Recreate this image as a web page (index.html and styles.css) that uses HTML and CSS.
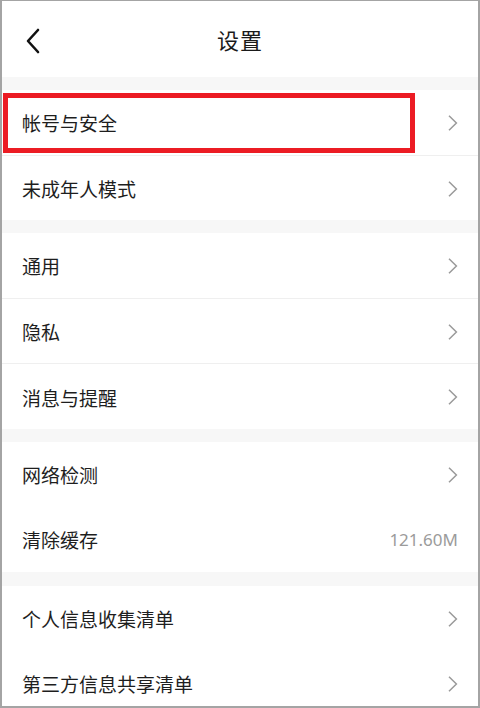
FILE: index.html
```html
<!DOCTYPE html>
<html lang="zh-CN">
<head>
<meta charset="utf-8">
<title>设置</title>
<link rel="stylesheet" href="styles.css">
</head>
<body>
<div class="screen">
  <header class="topbar">
    <svg class="back" width="16" height="26" viewBox="0 0 16 26"><path d="M13 2 L3 13 L13 24" fill="none" stroke="#111" stroke-width="2.6" stroke-linecap="round" stroke-linejoin="round"/></svg>
    <h1 class="title">设置</h1>
  </header>

  <div class="band"></div>
  <section class="group">
    <div class="row highlighted"><span class="label">帐号与安全</span><svg class="chev" viewBox="0 0 10 16"><path d="M1 0.8 L8.4 8 L1 15.2" fill="none" stroke="#9a9a9a" stroke-width="1.5"/></svg></div>
    <div class="row"><span class="label">未成年人模式</span><svg class="chev" viewBox="0 0 10 16"><path d="M1 0.8 L8.4 8 L1 15.2" fill="none" stroke="#9a9a9a" stroke-width="1.5"/></svg></div>
  </section>

  <div class="band"></div>
  <section class="group">
    <div class="row"><span class="label">通用</span><svg class="chev" viewBox="0 0 10 16"><path d="M1 0.8 L8.4 8 L1 15.2" fill="none" stroke="#9a9a9a" stroke-width="1.5"/></svg></div>
    <div class="row"><span class="label">隐私</span><svg class="chev" viewBox="0 0 10 16"><path d="M1 0.8 L8.4 8 L1 15.2" fill="none" stroke="#9a9a9a" stroke-width="1.5"/></svg></div>
    <div class="row"><span class="label">消息与提醒</span><svg class="chev" viewBox="0 0 10 16"><path d="M1 0.8 L8.4 8 L1 15.2" fill="none" stroke="#9a9a9a" stroke-width="1.5"/></svg></div>
  </section>

  <div class="band"></div>
  <section class="group nolines">
    <div class="row"><span class="label">网络检测</span><svg class="chev" viewBox="0 0 10 16"><path d="M1 0.8 L8.4 8 L1 15.2" fill="none" stroke="#9a9a9a" stroke-width="1.5"/></svg></div>
    <div class="row"><span class="label">清除缓存</span><span class="value">121.60M</span></div>
  </section>

  <div class="band band-tall"></div>
  <section class="group nolines">
    <div class="row"><span class="label">个人信息收集清单</span><svg class="chev" viewBox="0 0 10 16"><path d="M1 0.8 L8.4 8 L1 15.2" fill="none" stroke="#9a9a9a" stroke-width="1.5"/></svg></div>
    <div class="row"><span class="label">第三方信息共享清单</span><svg class="chev" viewBox="0 0 10 16"><path d="M1 0.8 L8.4 8 L1 15.2" fill="none" stroke="#9a9a9a" stroke-width="1.5"/></svg></div>
  </section>
</div>
</body>
</html>
```
FILE: styles.css
```css
*, *::before, *::after { box-sizing: border-box; margin: 0; padding: 0; }
html, body { width: 480px; height: 708px; overflow: hidden; background: #fff; }
body {
  font-family: "Noto Sans CJK SC", "Noto Sans", sans-serif;
  color: #1e1e1e;
}
.screen {
  width: 480px;
  height: 708px;
  border: 1px solid #a4a4a4;
  border-left-width: 2px;
  border-right-width: 2px;
  border-bottom-width: 2px;
  overflow: hidden;
  position: relative;
  background: #fff;
}
.topbar {
  height: 76px;
  display: flex;
  align-items: center;
  justify-content: center;
  position: relative;
}
.back {
  position: absolute;
  left: 23px;
  top: 27px;
}
.title {
  font-size: 22px;
  font-weight: 400;
  color: #1a1a1a;
  letter-spacing: 1px;
  line-height: 1;
}
.band { height: 13px; background: #f7f7f7; flex-shrink: 0; }
.band-tall { height: 14px; }
.group { display: flex; flex-direction: column; }
.row {
  height: 65px;
  flex-shrink: 0;
  display: flex;
  align-items: center;
  justify-content: space-between;
  padding: 0 20px 0 20px;
  position: relative;
}
.group:not(.nolines) .row + .row { border-top: 1px solid #efefef; padding-top: 1px; }
.group:not(.nolines) .row:nth-child(3) { height: 66px; }
.label { font-size: 19px; line-height: 1; color: #1e1e1e; }
.chev { width: 10px; height: 16px; margin-right: 0; }
.value { font-size: 17px; color: #9b9b9b; line-height: 1; font-family: "Noto Sans", "Noto Sans CJK SC", sans-serif; }
.highlighted::after {
  content: "";
  position: absolute;
  left: 1px;
  top: 3px;
  width: 412px;
  height: 60px;
  border: 5px solid #ec1c24;
}
```
